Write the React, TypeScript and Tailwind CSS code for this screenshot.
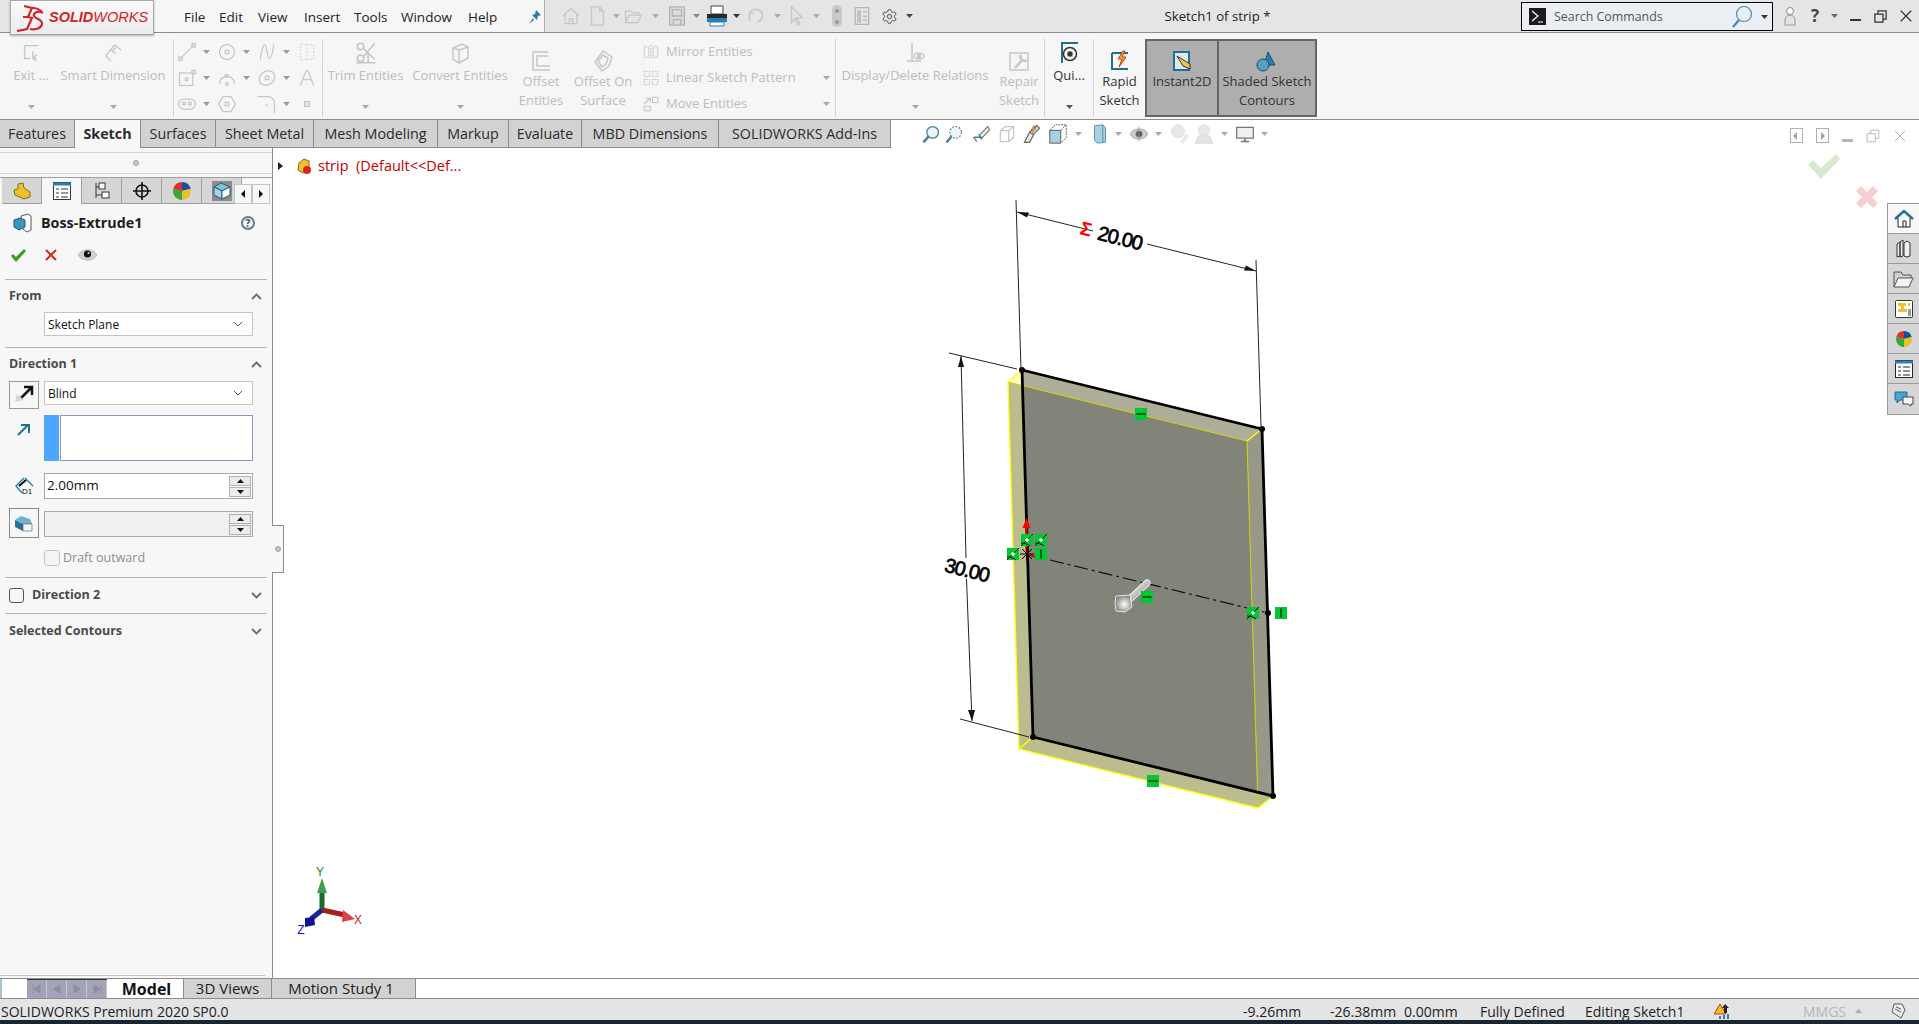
import type { ReactNode } from "react";
import { Settings } from "lucide-react";

const GREY = "#c6c6c6";

function Ic({ s = 22, c = GREY, w = 1.5, children }: { s?: number; c?: string; w?: number; children: ReactNode }) {
  return (
    <svg width={s} height={s} viewBox="0 0 24 24" fill="none" stroke={c} strokeWidth={w} className="shrink-0">
      {children}
    </svg>
  );
}

function Caret({ c = "#8a8a8a" }: { c?: string }) {
  return (
    <svg width="7" height="4" viewBox="0 0 7 4" className="shrink-0">
      <path d="M0 0h7L3.5 4z" fill={c} />
    </svg>
  );
}

function Large({
  w,
  lines,
  icon,
  caret,
  dim = true,
}: {
  w: string;
  lines: string[];
  icon: ReactNode;
  caret?: boolean;
  dim?: boolean;
}) {
  const two = lines.length > 1;
  return (
    <div className={`${w} flex h-[78px] shrink-0 flex-col items-center ${dim ? "text-[#bcbcbc]" : "text-[#333]"}`}>
      <div className={two ? "flex h-[33px] items-center pt-[10px]" : "flex h-[28px] items-center"}>{icon}</div>
      {lines.map((l) => (
        <div key={l} className={two ? "whitespace-nowrap leading-[19px]" : "h-[16px] whitespace-nowrap leading-[16px]"}>
          {l}
        </div>
      ))}
      {caret && (
        <div className="mt-[22px]">
          <Caret c={dim ? "#a8a8a8" : "#555"} />
        </div>
      )}
    </div>
  );
}

const Divider = () => <div className="h-[78px] w-px shrink-0 bg-[#d4d4d4]" />;

function ToolCell({ icon, caret = true }: { icon: ReactNode; caret?: boolean }) {
  return (
    <div className="flex h-[26px] items-center">
      <div className="flex w-[20px] justify-center">{icon}</div>
      {caret && (
        <div className="ml-[6px]">
          <Caret c="#9a9a9a" />
        </div>
      )}
    </div>
  );
}

function ListRow({ icon, label, caret }: { icon: ReactNode; label: string; caret?: boolean }) {
  return (
    <div className="flex h-[26px] items-center text-[#bcbcbc]">
      <div className="flex w-[30px] justify-center">{icon}</div>
      <span className="whitespace-nowrap">{label}</span>
      {caret && (
        <div className="absolute left-[187px]">
          <Caret c="#a8a8a8" />
        </div>
      )}
    </div>
  );
}

function Ribbon() {
  return (
    <div className="flex h-[87px] shrink-0 items-start border-b border-[#8c8c8c] bg-[#f6f6f6] pl-[2px] pt-[6px] text-[13px]">
      <Large
        w="w-[58px]"
        lines={["Exit ..."]}
        caret
        icon={
          <Ic>
            <path d="M5 4h15M5 4v14h6M14 10v5c0 2 2 3 4 3M18 14l-4 4 4 3" />
          </Ic>
        }
      />
      <Large
        w="w-[106px]"
        lines={["Smart Dimension"]}
        caret
        icon={
          <Ic>
            <path d="M14 3l7 6M4 15l10-12M10 21l-6-6M15 6l-4 5M9 8l6 5" />
          </Ic>
        }
      />
      <div className="w-[7px]" />
      <Divider />
      <div className="ml-[3px] grid grid-cols-[40px_40px_40px_25px]">
        <ToolCell icon={<Ic s={20}><path d="M4 20L20 4" /><rect x="2" y="18" width="4" height="4" /><rect x="18" y="2" width="4" height="4" /></Ic>} />
        <ToolCell icon={<Ic s={20}><circle cx="12" cy="12" r="9" /><rect x="10" y="10" width="4" height="4" /></Ic>} />
        <ToolCell icon={<Ic s={20}><path d="M4 21C6 6 8 2 10 4s2 16 5 16 4-10 5-17" /></Ic>} />
        <ToolCell caret={false} icon={<Ic s={20} w={1}><rect x="4" y="3" width="16" height="18" strokeDasharray="2 2" /><path d="M12 3v18" strokeDasharray="2 2" /></Ic>} />
        <ToolCell icon={<Ic s={20}><rect x="3" y="6" width="16" height="15" /><rect x="10" y="12" width="3" height="3" /><rect x="18" y="3" width="4" height="4" /></Ic>} />
        <ToolCell icon={<Ic s={20}><path d="M3 19a9 9 0 0118 0" /><path d="M10 17l4 4M14 17l-4 4" /><rect x="10" y="8" width="3" height="3" /></Ic>} />
        <ToolCell icon={<Ic s={20}><ellipse cx="12" cy="12" rx="10" ry="8" transform="rotate(-35 12 12)" /><rect x="10" y="10" width="4" height="4" /></Ic>} />
        <ToolCell caret={false} icon={<Ic s={20}><path d="M4 21L11 3h2l7 18M7 14h10" /></Ic>} />
        <ToolCell icon={<Ic s={20}><rect x="2" y="6" width="20" height="12" rx="6" /><rect x="7" y="10" width="3" height="3" /><rect x="14" y="10" width="3" height="3" /></Ic>} />
        <ToolCell caret={false} icon={<Ic s={20}><path d="M7 3h10l5 9-5 9H7l-5-9z" /><rect x="10" y="10" width="4" height="4" /></Ic>} />
        <ToolCell icon={<Ic s={20}><path d="M1 3h12a8 8 0 018 8v12" /><path d="M10 12l3 3M13 12l-3 3" strokeWidth="1" /></Ic>} />
        <ToolCell caret={false} icon={<div className="h-[6px] w-[6px] border border-[#c6c6c6] bg-[#e2e2e2]" />} />
      </div>
      <Divider />
      <Large
        w="w-[85px]"
        lines={["Trim Entities"]}
        caret
        icon={
          <Ic s={26}>
            <circle cx="7" cy="6" r="3" />
            <circle cx="7" cy="17" r="3" />
            <path d="M10 8l10 10M10 15l10-12M3 21h18M14 12v9" />
          </Ic>
        }
      />
      <Large
        w="w-[104px]"
        lines={["Convert Entities"]}
        caret
        icon={
          <Ic s={24}>
            <path d="M5 7l9-4 6 3v11l-9 5-6-4zM11 9l9-3M11 9v13M5 7l6 2" />
          </Ic>
        }
      />
      <Large
        w="w-[58px]"
        lines={["Offset", "Entities"]}
        icon={
          <Ic s={24}>
            <path d="M19 3H4v18h17M19 7H8v10h13" />
          </Ic>
        }
      />
      <Large
        w="w-[66px]"
        lines={["Offset On", "Surface"]}
        icon={
          <Ic s={24}>
            <path d="M12 2l9 6-3 9-7 5-7-9zM12 6l5 3-2 6-4 3-4-6z" />
          </Ic>
        }
      />
      <div className="relative w-[199px] shrink-0">
        <ListRow label="Mirror Entities" icon={<Ic s={18}><path d="M3 5h6v14H3zM15 5h6v14h-6zM12 2v20" strokeDasharray="3 1" /></Ic>} />
        <ListRow label="Linear Sketch Pattern" caret icon={<Ic s={18}><path d="M3 3h7v7H3zM14 3h7v7h-7zM3 14h7v7H3zM14 14h7v7h-7z" strokeDasharray="2 1" /></Ic>} />
        <ListRow label="Move Entities" caret icon={<Ic s={18}><path d="M3 12L11 4M5 4h6v6M14 3h7v7h-7zM3 15h8v6H3z" /></Ic>} />
      </div>
      <Divider />
      <Large
        w="w-[158px]"
        lines={["Display/Delete Relations"]}
        caret
        icon={
          <Ic s={24}>
            <path d="M9 2v18M4 20h14" />
            <ellipse cx="16" cy="15" rx="5" ry="3" />
            <circle cx="16" cy="15" r="1.5" fill={GREY} />
          </Ic>
        }
      />
      <Large
        w="w-[50px]"
        lines={["Repair", "Sketch"]}
        icon={
          <Ic s={24}>
            <path d="M3 4h18v17H3z" />
            <path d="M8 19l8-9M14 6a4 4 0 006 5" strokeWidth="2.5" />
          </Ic>
        }
      />
      <Divider />
      <Large
        w="w-[48px]"
        lines={["Qui..."]}
        dim={false}
        caret
        icon={
          <Ic s={24} c="#1f6f8f">
            <path d="M4 2h17M5 2v20" strokeWidth="2" />
            <circle cx="13" cy="13" r="6.5" stroke="#333" />
            <circle cx="13" cy="13" r="2" fill="#333" stroke="#333" />
          </Ic>
        }
      />
      <Divider />
      <Large
        w="w-[51px]"
        lines={["Rapid", "Sketch"]}
        dim={false}
        icon={
          <Ic s={24} c="#1f6f8f" w={2}>
            <path d="M4 4h16M4 4v16h16" />
            <path d="M15 2l-5 8h4l-3 8 7-10h-4l3-6z" fill="#f0b020" stroke="#c43c1c" strokeWidth="1" />
          </Ic>
        }
      />
      <div className="flex h-[78px] shrink-0 border-2 border-[#666] bg-[#aeaeae] text-[#222]">
        <div className="-mt-[2px] w-[70px]">
          <Large
            w="w-full"
            lines={["Instant2D", "\u00a0"]}
            dim={false}
            icon={
              <Ic s={24} c="#1f6f8f" w={2}>
                <path d="M4 3h15v18H4z" fill="#dfe8ee" />
                <path d="M7 7l13 8v5l-7-3z" fill="#efc64a" stroke="#333" strokeWidth="1" />
              </Ic>
            }
          />
        </div>
        <div className="w-[2px] bg-[#666]" />
        <div className="-mt-[2px] w-[96px]">
          <Large
            w="w-full"
            lines={["Shaded Sketch", "Contours"]}
            dim={false}
            icon={
              <Ic s={24} c="#17506e" w={1}>
                <path d="M13 3l7 13H9z" fill="#2c7fa8" />
                <circle cx="8" cy="16" r="6" fill="#5a9fc0" />
              </Ic>
            }
          />
        </div>
      </div>
    </div>
  );
}

const MENU: [string, string][] = [
  ["File", "w-[35px]"],
  ["Edit", "w-[39px]"],
  ["View", "w-[46px]"],
  ["Insert", "w-[50px]"],
  ["Tools", "w-[47px]"],
  ["Window", "w-[67px]"],
  ["Help", "w-[60px]"],
];

function QCell({ w, children }: { w: string; children: ReactNode }) {
  return <div className={`${w} flex h-full shrink-0 items-center justify-center`}>{children}</div>;
}

function TitleBar() {
  return (
    <div className="relative z-10 flex h-[33px] shrink-0 border-b border-[#8c8c8c] bg-[#e5e5e5] text-[13px] text-[#222]">
      <div className="w-[10px] shrink-0" />
      <div className="relative flex h-[35px] w-[144px] shrink-0 items-center border border-[#a8a8a8] bg-gradient-to-b from-[#fafafa] to-[#ececec] shadow-[0_1px_2px_rgba(0,0,0,0.3)]">
        <svg width="30" height="28" viewBox="0 0 30 28" fill="none" stroke="#d2232a" strokeWidth="2.2" className="ml-[5px] mt-[1px] shrink-0">
          <path d="M8 2l8 2-4 9H7M12 13l4 1-5 11-10 2" />
          <path d="M15 4h3c6 1 8 4 8 4M27 9c-5-3-10 0-9 3s9 3 8 8-8 6-12 5" />
        </svg>
        <span className="ml-[3px] font-['Liberation_Sans',sans-serif] text-[14.5px] italic text-[#d2232a]">
          <b>SOLID</b>WORKS
        </span>
      </div>
      <div className="flex w-[390px] shrink-0 items-center bg-[#f6f6f6] pl-[30px] pt-[2px] text-[13.5px]">
        {MENU.map(([m, w]) => (
          <div key={m} className={w}>
            {m}
          </div>
        ))}
        <svg width="14" height="16" viewBox="0 0 14 16" className="shrink-0">
          <path d="M8 1l5 5-3 1-1 4-5-5 3-1zM5 9l-4 6 5-4z" fill="#2a7fa8" />
        </svg>
      </div>
      <div className="w-[16px] shrink-0 border-l border-[#b0b0b0]" />
      <QCell w="w-[22px]"><Ic s={20}><path d="M2 12l10-9 10 9M5 10v11h14V10M10 21v-6h4v6" /></Ic></QCell>
      <QCell w="w-[30px]"><Ic s={22}><path d="M6 2h9l4 5v15H6zM15 2v5h4" /></Ic></QCell>
      <QCell w="w-[8px]"><Caret c="#aaa" /></QCell>
      <QCell w="w-[26px]"><Ic s={20}><path d="M3 20V6h6l2 2h8v4M3 20l4-9h15l-4 9z" /></Ic></QCell>
      <QCell w="w-[18px]"><Caret c="#aaa" /></QCell>
      <QCell w="w-[26px]"><Ic s={22} c="#b4b4b4"><path d="M4 2h16v20H4zM7 5h10v7H7zM8 16h8v6H8z" fill="#dcdcdc" /></Ic></QCell>
      <QCell w="w-[12px]"><Caret c="#888" /></QCell>
      <QCell w="w-[30px]">
        <svg width="22" height="24" viewBox="0 0 22 24" className="shrink-0">
          <path d="M5 2h12v8H5z" fill="#fff" stroke="#444" />
          <path d="M1 10h20v8H1z" fill="#2a2a2a" />
          <path d="M1 14h20v4H1z" fill="#2a7fb0" />
          <path d="M4 18h14v4H4z" fill="#fff" stroke="#2a7fb0" />
        </svg>
      </QCell>
      <QCell w="w-[8px]"><Caret c="#333" /></QCell>
      <QCell w="w-[34px]"><Ic s={20}><path d="M8 9H3v9M3 9c3-6 11-7 15-1 2 4 0 9-5 11" strokeWidth="2" /></Ic></QCell>
      <QCell w="w-[6px]"><Caret c="#aaa" /></QCell>
      <QCell w="w-[34px]"><Ic s={22}><path d="M6 2v17l4-4 3 7 2-1-3-7h6z" /></Ic></QCell>
      <QCell w="w-[4px]"><Caret c="#aaa" /></QCell>
      <div className="w-[8px] shrink-0" />
      <QCell w="w-[22px]"><div className="flex h-[22px] w-[10px] flex-col items-center justify-around rounded-[5px] bg-[#c8c8c8]"><span className="h-[4px] w-[4px] rounded-full bg-[#999]" /><span className="h-[4px] w-[4px] rounded-full bg-[#999]" /></div></QCell>
      <div className="w-[2px] shrink-0" />
      <QCell w="w-[24px]"><Ic s={20} c="#b4b4b4"><path d="M4 2h16v20H4zM7 6h3v3H7zM13 7h5M7 11h3v3H7zM13 12h5M7 16h3v3H7zM13 17h5" /></Ic></QCell>
      <div className="w-[4px] shrink-0" />
      <QCell w="w-[22px]"><Settings size={17} strokeWidth={1.3} color="#444" /></QCell>
      <div className="w-[4px] shrink-0" />
      <QCell w="w-[10px]"><Caret c="#444" /></QCell>
      <div className="flex min-w-0 flex-1 items-center justify-center whitespace-nowrap pt-[2px] text-[13.2px]">Sketch1 of strip *</div>
      <div className="mt-[2px] flex h-[29px] w-[252px] shrink-0 items-center border border-black bg-[#ebeef3] pl-[7px]">
        <svg width="17" height="17" viewBox="0 0 17 17" className="shrink-0">
          <rect width="17" height="17" fill="#1c1c1c" />
          <path d="M3 3l6 5-6 5M9 14h5" stroke="#fff" strokeWidth="1.2" fill="none" />
        </svg>
        <span className="ml-[8px] w-[177px] pt-[2px] text-[12.4px] text-[#555]">Search Commands</span>
        <svg width="22" height="24" viewBox="0 0 22 24" fill="none" className="shrink-0">
          <circle cx="13" cy="9" r="7.5" stroke="#4d8cb0" strokeWidth="1.2" />
          <path d="M8 15l-6 7" stroke="#4d8cb0" strokeWidth="2.4" />
        </svg>
        <div className="ml-[8px]"><Caret c="#333" /></div>
      </div>
      <QCell w="w-[34px]">
        <svg width="12" height="20" viewBox="0 0 12 20" className="shrink-0">
          <circle cx="6" cy="5" r="3.5" fill="#fff" stroke="#888" />
          <path d="M1 19v-5c0-3 2-5 5-5s5 2 5 5v5z" fill="#e2e2e2" stroke="#999" />
        </svg>
      </QCell>
      <QCell w="w-[16px]"><span className="text-[17px] font-bold text-[#444]">?</span></QCell>
      <div className="w-[6px] shrink-0" />
      <QCell w="w-[10px]"><Caret c="#666" /></QCell>
      <div className="w-[4px] shrink-0" />
      <QCell w="w-[24px]"><div className="mt-[8px] h-[2px] w-[11px] bg-[#333]" /></QCell>
      <QCell w="w-[26px]"><Ic s={15} c="#333" w={2}><path d="M3 8h13v13H3zM8 8V3h13v13h-5" /></Ic></QCell>
      <QCell w="w-[26px]"><Ic s={14} c="#333" w={2}><path d="M3 3l18 18M21 3L3 21" /></Ic></QCell>
    </div>
  );
}

const TABS: [string, string][] = [
  ["Features", "w-[75px]"],
  ["Sketch", "w-[66px]"],
  ["Surfaces", "w-[75px]"],
  ["Sheet Metal", "w-[98px]"],
  ["Mesh Modeling", "w-[124px]"],
  ["Markup", "w-[71px]"],
  ["Evaluate", "w-[73px]"],
  ["MBD Dimensions", "w-[137px]"],
  ["SOLIDWORKS Add-Ins", "w-[172px]"],
];

function HeadsUp() {
  return (
    <div className="relative flex h-full items-center">
      <div className="w-[28px]" />
      <QCell w="w-[24px]"><Ic s={20} c="#4a7f9c"><circle cx="14" cy="10" r="7" fill="#eef3f6" /><path d="M9 15l-6 7" strokeWidth="3" /></Ic></QCell>
      <QCell w="w-[22px]"><Ic s={20} c="#4a7f9c"><circle cx="14" cy="10" r="7" fill="#eef3f6" strokeDasharray="2 2" /><path d="M9 15l-6 7" strokeWidth="3" /></Ic></QCell>
      <QCell w="w-[32px]"><Ic s={20} c="#777"><path d="M10 14L20 3l2 4-10 11zM3 16h9l-3-4M3 16l4 5" /><path d="M4 16h9" stroke="#2a7fb0" /></Ic></QCell>
      <QCell w="w-[20px]"><Ic s={20}><path d="M4 8l6-5h10v13l-6 5H4zM14 8v13M4 8h10M14 8l6-5" /></Ic></QCell>
      <QCell w="w-[30px]"><Ic s={20} c="#666"><path d="M3 22l6-12 5 3-5 9zM9 10l9-8 3 3-8 8" fill="#e6e6e6" /><path d="M14 2l-3 5h3l-2 4 5-6h-3l2-3z" fill="#f0a020" stroke="#c43c1c" strokeWidth="0.5" /></Ic></QCell>
      <QCell w="w-[22px]"><Ic s={22} c="#555" w={1}><path d="M3 8h12v14H3z" fill="#a8d0e2" /><path d="M3 8l6-6h12v14l-6 6M15 8l6-6" strokeDasharray="2 1" /></Ic></QCell>
      <QCell w="w-[18px]"><Caret c="#aaa" /></QCell>
      <QCell w="w-[26px]"><Ic s={22} c="#5a8aa3" w={1}><path d="M6 3l9-1 3 3v16l-9 1-3-3z" fill="#a8d0e2" /><path d="M15 2v19" /></Ic></QCell>
      <QCell w="w-[10px]"><Caret c="#aaa" /></QCell>
      <QCell w="w-[32px]"><Ic s={20} c="#999" w={1}><ellipse cx="12" cy="12" rx="10" ry="6" fill="#d0d0d0" /><circle cx="12" cy="12" r="4" fill="#555" /><path d="M12 3v18" /></Ic></QCell>
      <QCell w="w-[6px]"><Caret c="#aaa" /></QCell>
      <QCell w="w-[36px]"><Ic s={22} c="#ddd" w={1}><circle cx="11" cy="9" r="7" fill="#e8e8e8" /><path d="M14 20l6-8 2 2-6 8z" fill="#eee" /></Ic></QCell>
      <QCell w="w-[14px]"><Ic s={22} c="#ddd" w={1}><circle cx="12" cy="8" r="6" fill="#e8e8e8" /><path d="M2 22l4-8h12l4 8z" fill="#e4e4e4" /></Ic></QCell>
      <QCell w="w-[26px]"><Caret c="#aaa" /></QCell>
      <QCell w="w-[16px]"><Ic s={20} c="#777"><path d="M2 4h20v13H2z" fill="#f0f0f0" /><path d="M12 17v4M7 21h10" strokeWidth="2" /></Ic></QCell>
      <QCell w="w-[22px]"><Caret c="#aaa" /></QCell>
    </div>
  );
}

function TabBar() {
  return (
    <div className="flex h-[28px] shrink-0 bg-white text-[14.3px] text-[#2c2c2c]">
      {TABS.map(([t, w]) => (
        <div
          key={t}
          className={`${w} flex shrink-0 items-center justify-center whitespace-nowrap border-r border-[#8c8c8c] ${
            t === "Sketch" ? "bg-[#f7f7f7] font-bold" : "border-b bg-[#d2d2d2]"
          }`}
        >
          {t}
        </div>
      ))}
      <HeadsUp />
    </div>
  );
}

const Line = () => <div className="mx-[5px] h-px bg-[#b4b4b4]" />;

const Chevron = ({ up }: { up?: boolean }) => (
  <svg width="11" height="7" viewBox="0 0 11 7" fill="none" stroke="#6a6a6a" strokeWidth="1.8" className="shrink-0">
    <path d={up ? "M1 6l4.5-4.5L10 6" : "M1 1l4.5 4.5L10 1"} />
  </svg>
);

function Select({ value }: { value: string }) {
  return (
    <div className="flex h-[24px] w-[209px] items-center justify-between border border-[#c4c4c4] bg-white pl-[3px] pr-[9px] text-[12px] text-[#111]">
      <span className="pt-[2px]">{value}</span>
      <svg width="10" height="6" viewBox="0 0 10 6" fill="none" stroke="#555" strokeWidth="1">
        <path d="M1 1l4 4 4-4" />
      </svg>
    </div>
  );
}

function Spin() {
  return (
    <div className="flex w-[22px] flex-col gap-[1px]">
      {[0, 1].map((i) => (
        <div key={i} className="flex h-[10px] items-center justify-center border border-[#b0b0b0] bg-[#ececec]">
          <svg width="7" height="4" viewBox="0 0 7 4" className="shrink-0">
            <path d={i ? "M0 0h7L3.5 4z" : "M0 4h7L3.5 0z"} fill="#111" />
          </svg>
        </div>
      ))}
    </div>
  );
}

const Dot = () => <div className="h-[6px] w-[6px] rounded-full border border-[#a0a0a0] bg-[#c8c8c8]" />;

function Ball({ s = 16 }: { s?: number }) {
  return (
    <svg width={s} height={s} viewBox="0 0 16 16" className="shrink-0">
      <path d="M8 8V0A8 8 0 00.3 6z" fill="#d8322a" />
      <path d="M8 8V0a8 8 0 017.7 6z" fill="#1a4ea0" />
      <path d="M8 8l7.7-2A8 8 0 018 16z" fill="#e6c228" />
      <path d="M8 8L.3 6A8 8 0 008 16z" fill="#3aa53a" />
    </svg>
  );
}

function PanelTab({ active, children }: { active?: boolean; children: ReactNode }) {
  return (
    <div
      className={`flex h-[26px] w-[40px] shrink-0 items-center justify-center border-r border-[#a0a0a0] ${
        active ? "bg-[#f7f7f7]" : "border-b bg-[#d6d6d6]"
      }`}
    >
      {children}
    </div>
  );
}

function Panel() {
  return (
    <div className="relative w-[273px] shrink-0 border-r border-[#8c8c8c] bg-[#f7f7f7]">
      <div className="h-[5px] border-b border-[#d4d4d4]" />
      <div className="flex h-[21px] items-center justify-center border-b border-[#d4d4d4]">
        <Dot />
      </div>
      <div className="relative mt-[3px] flex h-[26px] border-t border-[#a0a0a0] pl-[2px]">
        <PanelTab>
          <svg width="18" height="18" viewBox="0 0 18 18" className="shrink-0">
            <path d="M1 8l4-1V2l5-1 1 5 6 4v5l-6 2-9-4z" fill="#f0c030" stroke="#8a6a10" />
          </svg>
        </PanelTab>
        <PanelTab active>
          <svg width="18" height="18" viewBox="0 0 18 18" fill="none" stroke="#334" className="shrink-0">
            <rect x=".5" y=".5" width="17" height="17" fill="#fff" />
            <path d="M0 2h18" stroke="#2a7fb0" strokeWidth="3" />
            <path d="M3 7h3M8 7h7M3 11h3M8 11h7M3 15h3M8 15h7" />
          </svg>
        </PanelTab>
        <PanelTab>
          <svg width="18" height="18" viewBox="0 0 18 18" fill="#fff" stroke="#333" className="shrink-0">
            <path d="M3 1v15M3 5h3M3 13h6" />
            <rect x="6" y="1" width="6" height="6" />
            <rect x="9" y="10" width="7" height="6" />
          </svg>
        </PanelTab>
        <PanelTab>
          <svg width="18" height="18" viewBox="0 0 18 18" fill="none" stroke="#111" strokeWidth="1.6" className="shrink-0">
            <circle cx="9" cy="9" r="6" />
            <path d="M9 0v18M0 9h18" />
          </svg>
        </PanelTab>
        <PanelTab>
          <Ball s={18} />
        </PanelTab>
        <PanelTab>
          <div className="flex h-[20px] w-[20px] items-center justify-center bg-[#8c8c8c]">
            <svg width="18" height="18" viewBox="0 0 18 18" stroke="#1f5f80" className="shrink-0">
              <path d="M1 5l7-4 9 4-8 4z" fill="#7fc0dc" />
              <path d="M1 5v8l8 4V9z" fill="#a9d4e6" />
              <path d="M9 9v8l8-4V5z" fill="#fff" />
            </svg>
          </div>
        </PanelTab>
        <div className="absolute left-[234px] top-[6px] flex h-[20px]">
          {["M5 0v8L1 4z", "M1 0v8l4-4z"].map((d) => (
            <div key={d} className="flex w-[18px] items-center justify-center border border-[#c4c4c4] bg-[#f7f7f7]">
              <svg width="6" height="8" viewBox="0 0 6 8">
                <path d={d} fill="#111" />
              </svg>
            </div>
          ))}
        </div>
      </div>

      <div className="flex h-[40px] items-center pl-[13px] pr-[17px]">
        <svg width="19" height="20" viewBox="0 0 19 20" className="shrink-0">
          <path d="M8 3l7-2 3 2v14l-4 2-4-3z" fill="#fff" stroke="#555" />
          <path d="M1 7l6-2 5 2v7l-6 3-5-3z" fill="#3f93bb" stroke="#1d5a78" />
        </svg>
        <span className="ml-[9px] flex-1 text-[14.3px] font-bold text-[#1c1c1c]">Boss-Extrude1</span>
        <div className="flex h-[14px] w-[14px] items-center justify-center rounded-full border-2 border-[#5a7e92] text-[10px] font-bold text-[#445]">
          ?
        </div>
      </div>
      <div className="flex h-[24px] items-center pl-[11px]">
        <svg width="15" height="13" viewBox="0 0 15 13" className="shrink-0">
          <path d="M0 7l2-2 3 3 8-8 2 2-10 11z" fill="#3c9a1c" />
        </svg>
        <svg width="12" height="12" viewBox="0 0 12 12" stroke="#d8261c" strokeWidth="2" className="ml-[19px] shrink-0">
          <path d="M1 1l10 10M11 1L1 11" />
        </svg>
        <svg width="19" height="12" viewBox="0 0 19 12" className="ml-[21px] shrink-0">
          <path d="M0 6c4-7 15-7 19 0-4 7-15 7-19 0z" fill="#cfcfcf" stroke="#999" strokeWidth=".5" />
          <circle cx="9.5" cy="5" r="3.6" fill="#111" />
          <circle cx="10.5" cy="4" r="1" fill="#ddd" />
        </svg>
      </div>

      <div className="h-[12px]" />
      <Line />
      <div className="flex h-[32px] items-center justify-between pl-[9px] pr-[10px] pt-[1px] text-[12.5px] font-bold text-[#4a4a4a]">
        From
        <Chevron up />
      </div>
      <div className="pl-[44px]">
        <Select value="Sketch Plane" />
      </div>
      <div className="h-[11px]" />
      <Line />
      <div className="flex h-[33px] items-center justify-between pl-[9px] pr-[10px] text-[12.5px] font-bold text-[#4a4a4a]">
        Direction 1
        <Chevron up />
      </div>
      <div className="flex items-start pl-[9px]">
        <div className="flex h-[28px] w-[30px] items-center justify-center border border-[#999] bg-[#f7f7f7]">
          <svg width="20" height="20" viewBox="0 0 20 20" className="shrink-0">
            <path d="M7 13L17 3M10 2h8v8" stroke="#111" strokeWidth="2.5" fill="none" />
            <path d="M3 9L1 17l9-2z" fill="#d4d4d4" />
          </svg>
        </div>
        <div className="ml-[5px]">
          <Select value="Blind" />
        </div>
      </div>
      <div className="mt-[6px] flex items-start pl-[17px]">
        <svg width="13" height="13" viewBox="0 0 13 13" fill="none" stroke="#1f6f8f" strokeWidth="2" className="mt-[8px] shrink-0">
          <path d="M1 12L11 2M4 2h8v8" />
        </svg>
        <div className="ml-[14px] flex h-[46px] w-[209px]">
          <div className="w-[15px] bg-[#4da6ff]" />
          <div className="ml-px flex-1 border border-[#8a97b5] bg-white" />
        </div>
      </div>
      <div className="mt-[12px] flex items-center pl-[15px]">
        <svg width="19" height="19" viewBox="0 0 19 19" fill="none" className="shrink-0">
          <path d="M9 1L1 9l6 7M10 1l8 8" stroke="#2a7fb0" strokeWidth="1.4" />
          <path d="M4 9l7-6" stroke="#111" strokeWidth="2.2" />
          <text x="7" y="17" fontSize="8" fill="#111" stroke="none" fontFamily="Liberation Sans">D1</text>
        </svg>
        <div className="ml-[10px] flex h-[26px] w-[209px] items-center justify-between border border-[#a8a8a8] bg-white pl-[2px] pr-[1px] text-[13.5px] text-[#111]">
          <span className="pb-[1px]">2.00mm</span>
          <Spin />
        </div>
      </div>
      <div className="mt-[9px] flex items-start pl-[9px]">
        <div className="flex h-[30px] w-[30px] items-center justify-center border border-[#888]">
          <svg width="20" height="17" viewBox="0 0 20 17" className="shrink-0">
            <path d="M1 5l6-4 9 3 2 5-9 0z" fill="#6fb2d0" />
            <path d="M1 5v7l8 4V9z" fill="#2a6f95" />
            <path d="M9 9h9v7H9z" fill="#f4f4f4" stroke="#555" strokeWidth=".6" />
          </svg>
        </div>
        <div className="ml-[5px] mt-[3px] flex h-[26px] w-[209px] items-center justify-end border border-[#a8a8a8] bg-[#f0f0f0] pr-[1px]">
          <Spin />
        </div>
      </div>
      <div className="mt-[12px] flex h-[16px] items-center pl-[44px] text-[12.5px] text-[#8c8c8c]">
        <div className="h-[16px] w-[16px] rounded-[3px] border border-[#c4c4c4] bg-[#f4f4f4]" />
        <span className="ml-[3px]">Draft outward</span>
      </div>
      <div className="h-[11px]" />
      <Line />
      <div className="flex h-[35px] items-center justify-between pl-[9px] pr-[10px] text-[12.5px] font-bold text-[#4a4a4a]">
        <div className="flex items-center">
          <div className="h-[15px] w-[15px] rounded-[3px] border border-[#555] bg-[#f7f7f7]" />
          <span className="ml-[8px]">Direction 2</span>
        </div>
        <Chevron />
      </div>
      <Line />
      <div className="flex h-[33px] items-center justify-between pl-[9px] pr-[10px] pt-[1px] text-[12.5px] font-bold text-[#4a4a4a]">
        Selected Contours
        <Chevron />
      </div>
      <div className="absolute bottom-[2px] left-0 right-[7px] h-px bg-[#c4c4c4]" />
    </div>
  );
}

function Tag({ x, y, kind }: { x: number; y: number; kind: "h" | "v" | "c" }) {
  return (
    <g transform={`translate(${x} ${y})`}>
      <rect x="-6" y="-6" width="12" height="12" fill="#00c832" />
      {kind === "h" && <path d="M-4.5 0h9" stroke="#111" strokeWidth="1.2" />}
      {kind === "v" && <path d="M0-4.5v9" stroke="#111" strokeWidth="1.2" />}
      {kind === "c" && (
        <g fill="none">
          <path d="M-6 6L6-6M-6 3c3 0 7 1 9 3" stroke="#111" strokeWidth="1" />
          <circle r="1.8" fill="#fff" />
        </g>
      )}
    </g>
  );
}

function Sketch() {
  return (
    <svg viewBox="273 147 1646 831" className="absolute left-0 top-0 h-[831px] w-[1646px]">
      <defs>
        <linearGradient id="shaft" x1="0" y1="0" x2="1" y2="1">
          <stop offset="0" stopColor="#f4f4f4" />
          <stop offset="1" stopColor="#8f8f8f" />
        </linearGradient>
        <radialGradient id="cone" cx="0.55" cy="0.55" r="0.6">
          <stop offset="0" stopColor="#ffffff" />
          <stop offset="1" stopColor="#777777" />
        </radialGradient>
      </defs>

      {/* extruded preview */}
      <path d="M1008 381L1022 369L1032.7 736L1273 795L1258 807L1019 748Z" fill="#bcbd8f" />
      <path d="M1008 381L1022 369L1022.5 385Z" fill="#ffffc4" />
      <path d="M1023 385L1022 369L1262 428L1247 440Z" fill="#aeae98" />
      <path d="M1262 428L1273 795L1258 791L1247 440Z" fill="#989888" />
      <path d="M1023 385L1247 440L1258 791L1033 736Z" fill="#828379" />
      <path d="M1008 381L1247 440L1258 807" fill="none" stroke="#d2d200" strokeWidth="1" />
      <path d="M1022 369L1008 381L1019 748L1258 807L1273 795M1262 428L1247 440M1033 736L1019 748" fill="none" stroke="#ffff00" strokeWidth="1.3" />

      {/* sketch profile */}
      <path d="M1022 369L1262 428L1273 795L1033 736Z" fill="none" stroke="#000" strokeWidth="2.8" />
      {[[1022, 369], [1262, 428], [1273, 795], [1033, 736], [1268, 612]].map(([x, y]) => (
        <circle key={x} cx={x} cy={y} r="3" fill="#000" />
      ))}
      <path d="M1050 559L1268 612" stroke="#111" strokeWidth="1.2" strokeDasharray="14 4 3 4" />

      {/* dimensions */}
      <g stroke="#222" strokeWidth="1" fill="none">
        <path d="M1016 199L1021 369M1256 259L1261 425M949 352L1017 368M960 718L1029 736" />
        <path d="M1017 211L1093 230M1147 243L1256 270M961 355L966 557M966.5 578L972 720" />
      </g>
      <path d="M1017 211l12 0.5-2 5zM1256 270l-12-0.5 2-5zM961 355l-3 11 6 0zM972 720l-4-11 7 0z" fill="#111" />
      <text x="1120" y="237" fontSize="20" fontFamily="Liberation Sans" textAnchor="middle" dominantBaseline="central" stroke="#000" strokeWidth=".7" letterSpacing="-1" transform="rotate(14 1120 237)">
        20.00
      </text>
      <text x="1086" y="228" fontSize="19" fontWeight="bold" fontFamily="Liberation Sans" fill="#f00" textAnchor="middle" dominantBaseline="central" transform="rotate(14 1086 228)">
        Σ
      </text>
      <text x="967" y="569" fontSize="20" fontFamily="Liberation Sans" textAnchor="middle" dominantBaseline="central" stroke="#000" strokeWidth=".7" letterSpacing="-1" transform="rotate(14 967 569)">
        30.00
      </text>

      {/* origin */}
      <path d="M1026.5 553V527" stroke="#e00" strokeWidth="2" />
      <path d="M1026.5 517l4 10h-8z" fill="#f00" />
      <path d="M1027 553l9 3" stroke="#d00" strokeWidth="2" />
      <path d="M1022 548l10 10M1032 548l-10 10M1027 546v14M1020 553h14" stroke="#000" strokeWidth="1" />

      {/* relations */}
      <Tag x={1141} y={413} kind="h" />
      <Tag x={1153} y={780} kind="h" />
      <Tag x={1027} y={539} kind="c" />
      <Tag x={1041} y={539} kind="c" />
      <Tag x={1013} y={553} kind="c" />
      <Tag x={1041} y={553} kind="v" />
      <Tag x={1253} y={612} kind="c" />
      <Tag x={1281} y={612} kind="v" />

      {/* extrude handle */}
      <path d="M1147 582L1131 597" stroke="#fff" strokeWidth="7" strokeLinecap="round" />
      <path d="M1147 582L1131 597" stroke="url(#shaft)" strokeWidth="5.5" strokeLinecap="round" />
      <path d="M1116 595l14-1 2 12-7 5-9-1-1-8z" fill="url(#cone)" stroke="#e8e8e8" />
      <Tag x={1147} y={596} kind="h" />

      {/* accept / cancel */}
      <path d="M1808 164l5-5 8 8 15-14 4 5-19 20z" fill="#d8e9d2" />
      <path d="M1857 187l5-5 6 6 6-6 5 5-6 6 6 6-5 5-6-6-6 6-5-5 6-6z" fill="#f6d0d0" transform="translate(-1 3)" />

      {/* triad */}
      <path d="M322 909V892" stroke="#1a6b2a" strokeWidth="5" />
      <path d="M322 877l5 15h-10z" fill="#3fa050" />
      <path d="M322 909l23 5" stroke="#a81c1c" strokeWidth="5" />
      <path d="M355 918l-12-9-1 12z" fill="#dd4444" />
      <path d="M322 909l-11 9" stroke="#1a2a90" strokeWidth="5" />
      <path d="M305 917l9-1 1 8-10 2z" fill="#10109a" />
      <text x="320" y="875" fontSize="12" fill="#0a8a1a" textAnchor="middle" fontFamily="Liberation Sans">Y</text>
      <text x="358" y="923" fontSize="12" fill="#e01010" textAnchor="middle" fontFamily="Liberation Sans">X</text>
      <text x="301" y="933" fontSize="12" fill="#1010e0" textAnchor="middle" fontFamily="Liberation Sans">Z</text>
    </svg>
  );
}

function PaneCell({ active, children }: { active?: boolean; children: ReactNode }) {
  return (
    <div className={`flex h-[30px] items-center justify-center border-b border-[#9a9a9a] ${active ? "bg-[#f8f8f8]" : "bg-[#d6d6d6]"}`}>
      {children}
    </div>
  );
}

function Viewport() {
  return (
    <div className="relative min-w-0 flex-1 bg-white">
      <Sketch />

      <div className="absolute left-[5px] top-[7px] flex items-center text-[14.5px] text-[#c00000]">
        <svg width="6" height="8" viewBox="0 0 6 8" className="shrink-0">
          <path d="M0 0v8l5-4z" fill="#222" />
        </svg>
        <svg width="18" height="18" viewBox="0 0 18 18" className="ml-[11px] shrink-0">
          <path d="M4 6l5-4 5 2v8l-6 4-5-3z" fill="#f0c030" stroke="#8a6a10" />
          <circle cx="12" cy="13" r="4" fill="#d8261c" />
        </svg>
        <span className="ml-[5px] whitespace-pre">strip  (Default&lt;&lt;Def...</span>
      </div>

      <div className="absolute right-0 top-[55px] w-[32px] border-y border-l border-[#9a9a9a]">
        <PaneCell active>
          <svg width="20" height="20" viewBox="0 0 20 20" className="shrink-0">
            <path d="M1 10L10 2l9 8" fill="none" stroke="#1f6f8f" strokeWidth="2.4" />
            <path d="M4 9v9h12V9M9 18v-6h3v6" fill="#fff" stroke="#222" />
          </svg>
        </PaneCell>
        <PaneCell>
          <svg width="16" height="20" viewBox="0 0 16 20" fill="#f0f0f0" stroke="#333" className="shrink-0">
            <path d="M1 5l3-2v14l-3 1zM4 3l3-2v16l-3 1zM8 4l3-2 3 2v13l-3 1-3-1z" />
          </svg>
        </PaneCell>
        <PaneCell>
          <svg width="21" height="18" viewBox="0 0 21 18" stroke="#555" className="shrink-0">
            <path d="M1 17V2h7l2 3h8v4" fill="#d0d0d0" />
            <path d="M1 17L5 8h15l-4 9z" fill="#f4f4f4" />
          </svg>
        </PaneCell>
        <PaneCell>
          <svg width="18" height="18" viewBox="0 0 18 18" className="shrink-0">
            <rect x=".5" y=".5" width="17" height="17" rx="1" fill="#fff" stroke="#333" />
            <path d="M3 3h8v3H9v3h3v3H3V9h3V6H3zM13 3h2v3h-2z" fill="#f0c030" />
            <rect x="13" y="9" width="3" height="7" fill="#999" />
          </svg>
        </PaneCell>
        <PaneCell>
          <Ball />
        </PaneCell>
        <PaneCell>
          <svg width="18" height="18" viewBox="0 0 18 18" fill="none" stroke="#223" className="shrink-0">
            <rect x=".5" y=".5" width="17" height="17" fill="#fff" />
            <path d="M0 2h18" stroke="#2a7fb0" strokeWidth="3" />
            <path d="M3 7h3M8 7h7M3 11h3M8 11h7M3 15h3M8 15h7" />
          </svg>
        </PaneCell>
        <div className="flex h-[30px] items-center justify-center bg-[#d6d6d6]">
          <svg width="20" height="16" viewBox="0 0 20 16" className="shrink-0">
            <path d="M1 1h12v8H6l-3 3V9H1z" fill="#45a5d2" stroke="#1f6f8f" />
            <path d="M9 6h10v7h-2v2l-3-2H9z" fill="#f6f6f6" stroke="#444" />
          </svg>
        </div>
      </div>

      <div className="absolute left-[-1px] top-[377px] flex h-[48px] w-[12px] items-center justify-center border-y border-r border-[#8c8c8c] bg-[#f7f7f7]">
        <Dot />
      </div>
    </div>
  );
}

function WinControls() {
  return (
    <div className="absolute left-[1790px] top-[128px] flex items-center">
      {["M5 0v8L1 4z", "M1 0v8l4-4z"].map((d, i) => (
        <div key={d} className={`flex h-[15px] w-[13px] items-center border border-[#b0b0b0] pl-[1px] ${i ? "ml-[13px] justify-center" : ""}`}>
          <svg width="6" height="8" viewBox="0 0 6 8">
            <path d={d} fill="#a0a0a0" />
          </svg>
        </div>
      ))}
      <div className="ml-[13px] mt-[10px] h-[3px] w-[11px] bg-[#b4b4b4]" />
      <div className="ml-[13px]">
        <Ic s={14} c="#b0b0b0"><path d="M2 8h14v14H2zM8 8V2h14v14h-6" /></Ic>
      </div>
      <div className="ml-[13px]">
        <Ic s={14} c="#b0b0b0"><path d="M3 3l18 18M21 3L3 21" /></Ic>
      </div>
    </div>
  );
}

function BottomTabs() {
  return (
    <div className="flex h-[20px] shrink-0 border-t border-[#8c8c8c] bg-[#f7f7f7] text-[15px] text-[#222]">
      <div className="w-[2px] bg-[#a8c4cc]" />
      <div className="w-[25px] bg-white" />
      <div className="flex w-[80px] border-t border-[#333] bg-[#a3a3b8]">
        {["M3 1v8M10 1v8L4 5z", "M10 1v8L4 5z", "M4 1v8l6-4z", "M4 1v8l6-4zM11 1v8"].map((d) => (
          <div key={d} className="flex flex-1 items-center justify-center border-r border-[#c8c8d4]">
            <svg width="13" height="10" viewBox="0 0 13 10" stroke="#8c8ca4" fill="#8c8ca4">
              <path d={d} />
            </svg>
          </div>
        ))}
      </div>
      <div className="flex w-[76px] items-center justify-center bg-white pl-[3px] text-[16px] font-bold text-[#111]">Model</div>
      <div className="flex w-[89px] items-center justify-center border-x border-[#8c8c8c] bg-[#d2d2d2]">3D Views</div>
      <div className="flex w-[144px] items-center justify-center border-r border-[#8c8c8c] bg-[#d2d2d2] pr-[5px]">Motion Study 1</div>
      <div className="flex-1 bg-white" />
    </div>
  );
}

function StatusBar() {
  return (
    <div className="flex h-[22px] shrink-0 items-center border-t border-[#8c8c8c] bg-[#e4e4e4] pl-[1px] pt-[3px] text-[14px] text-[#222]">
      <span className="w-[1242px] whitespace-nowrap">SOLIDWORKS Premium 2020 SP0.0</span>
      <span className="w-[87px]">-9.26mm</span>
      <span className="w-[74px]">-26.38mm</span>
      <span className="w-[76px]">0.00mm</span>
      <span className="w-[105px]">Fully Defined</span>
      <span className="w-[129px]">Editing Sketch1</span>
      <svg width="16" height="16" viewBox="0 0 16 16" className="shrink-0">
        <path d="M6 1l6 10H0z" fill="#f0c020" stroke="#c43c1c" />
        <path d="M11 1l4 4h-2v5h-3V5H8z" fill="#222" />
        <path d="M5 13h2v3H5zM9 12h2v4H9zM13 11h2v5h-2z" fill="#2a7fb0" />
      </svg>
      <span className="ml-[73px] w-[52px] text-[#b4b4b4]">MMGS</span>
      <svg width="7" height="4" viewBox="0 0 7 4" className="shrink-0">
        <path d="M0 4h7L3.5 0z" fill="#aaa" />
      </svg>
      <svg width="16" height="16" viewBox="0 0 16 16" fill="#eee" stroke="#555" className="ml-[28px] shrink-0">
        <path d="M4 1h8l3 6-4 8-9-6z" />
        <path d="M5 6l6 3M6 4l5 2" />
      </svg>
    </div>
  );
}

export default function App() {
  return (
    <div className="relative flex h-screen w-screen flex-col overflow-hidden bg-white font-['Open_Sans',sans-serif]">
      <TitleBar />
      <Ribbon />
      <TabBar />
      <div className="flex min-h-0 flex-1">
        <Panel />
        <Viewport />
      </div>
      <BottomTabs />
      <StatusBar />
      <div className="h-[4px] shrink-0 bg-[#1a2530]" />
      <WinControls />
    </div>
  );
}
